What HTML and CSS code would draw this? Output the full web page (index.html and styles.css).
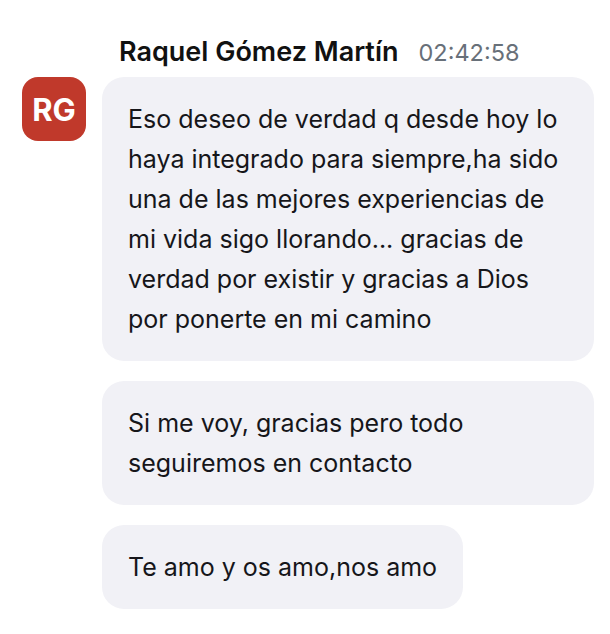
FILE: index.html
```html
<!DOCTYPE html>
<html>
	<head>
		<meta charset="utf-8">
		<title>Chat</title>
		<link rel="stylesheet" href="styles.css">
	</head>
	<body>
		<section class="thread">
			<div class="msg-head">
				<span class="author">Raquel Gómez Martín</span>
				<span class="time">02:42:58</span>
			</div>
			<div class="avatar">RG</div>
			<div class="bubbles">
				<p class="bubble">Eso deseo de verdad q desde hoy lo haya integrado para siempre,ha sido una de las mejores experiencias de mi vida sigo llorando... gracias de verdad por existir y gracias a Dios por ponerte en mi camino</p>
				<p class="bubble">Si me voy, gracias pero todo seguiremos en contacto</p>
				<p class="bubble">Te amo y os amo,nos amo</p>
			</div>
		</section>
	</body>
</html>
```

FILE: styles.css
```css
body {
	margin: 0;
	padding: 0;
	background: #ffffff;
	font-family: Inter, "Noto Sans", sans-serif;
	color: #16161a;
}
* {
	box-sizing: border-box;
}
p {
	margin: 0;
}
.thread {
	display: grid;
	grid-template-columns: 64px 1fr;
	column-gap: 16px;
	padding: 35px 16px 0 22px;
}
.msg-head {
	grid-column: 2;
	display: flex;
	align-items: baseline;
	gap: 20px;
	padding-left: 17px;
	height: 42px;
}
.author {
	font-size: 27px;
	font-weight: 600;
	color: #111111;
}
.time {
	font-size: 23.5px;
	color: #687079;
}
.avatar {
	grid-column: 1;
	grid-row: 2;
	width: 64px;
	height: 64px;
	border-radius: 16px;
	background: #c0392b;
	color: #ffffff;
	font-size: 31px;
	font-weight: 700;
	display: flex;
	align-items: center;
	justify-content: center;
}
.bubbles {
	grid-column: 2;
	grid-row: 2;
	display: flex;
	flex-direction: column;
	align-items: flex-start;
	gap: 20px;
}
.bubble {
	background: #f1f1f6;
	border-radius: 22px;
	padding: 22px 26px;
	font-size: 25px;
	line-height: 40px;
}
```
